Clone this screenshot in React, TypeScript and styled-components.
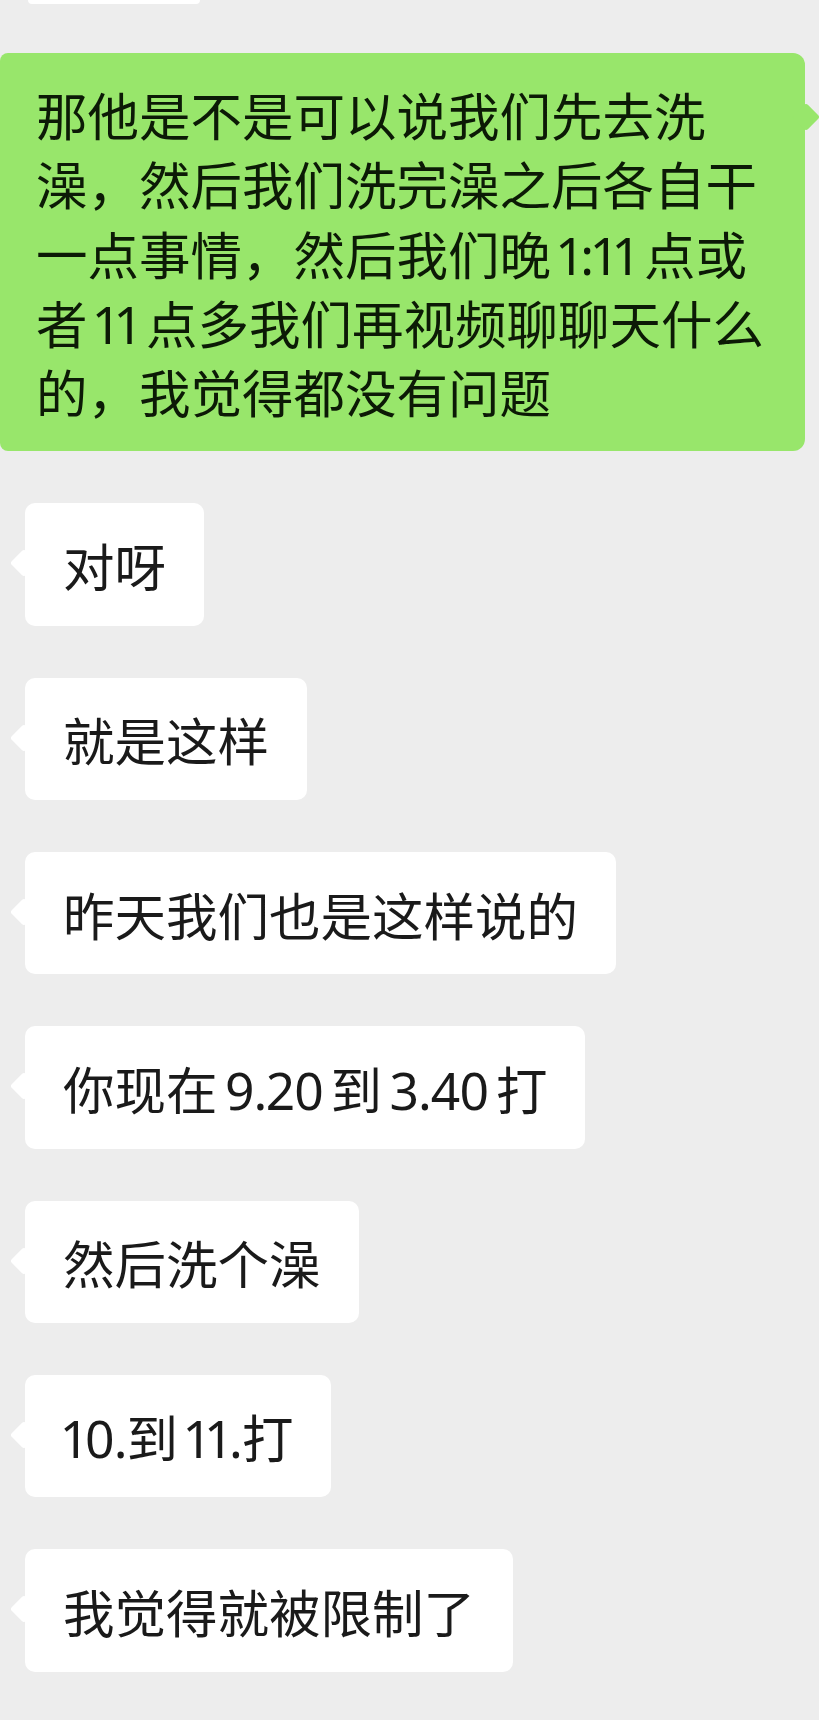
import React from 'react';
import styled, { createGlobalStyle } from 'styled-components';

const GlobalStyle = createGlobalStyle`
  html, body {
    margin: 0;
    padding: 0;
    background: #ededed;
  }
  body {
    font-family: "Noto Sans CJK SC", "Noto Sans", sans-serif;
    -webkit-font-smoothing: antialiased;
  }
`;

const Page = styled.div`
  width: 819px;
  height: 1720px;
  overflow: hidden;
  display: flex;
  flex-direction: column;
  background: #ededed;
`;

const PrevBubbleEdge = styled.div`
  width: 172px;
  height: 4px;
  margin-left: 28px;
  background: #ffffff;
  border-radius: 0 0 10px 10px;
`;

const Bubble = styled.div`
  position: relative;
  box-sizing: border-box;
  font-size: 51.5px;
  line-height: 69.3px;
  word-spacing: -4px;
  border-radius: 10px;
  white-space: nowrap;

  &::before {
    content: '';
    position: absolute;
    width: 20px;
    height: 20px;
    border-radius: 3px;
    transform: rotate(45deg);
    background: inherit;
  }
`;

const SentBubble = styled(Bubble)`
  width: 805px;
  margin-top: 49px;
  padding: 26px 36px;
  background: #98e66b;
  color: #0c1a06;
  border-radius: 8px 12px 12px 8px;

  &::before {
    top: 54px;
    right: -11px;
  }
`;

const ReceivedBubble = styled(Bubble)`
  align-self: flex-start;
  margin-left: 25px;
  margin-top: 52px;
  padding: 26.5px 38px;
  background: #ffffff;
  color: #1a1a1a;

  &::before {
    top: 50px;
    left: -11px;
  }
`;

// digits in the screenshot are proportional (narrow "1")
const Num = styled.span`
  font-family: "Noto Sans", "Noto Sans CJK SC", sans-serif;
  font-feature-settings: "pnum" 1;
  font-variant-numeric: proportional-nums;
  letter-spacing: -1px;
  line-height: 1;
`;

const withNums = (text: string) =>
  text.split(/([0-9.:]+)/).map((part, i) =>
    /^[0-9.:]+$/.test(part) ? <Num key={i}>{part}</Num> : part
  );

const sentLines = [
  '那他是不是可以说我们先去洗',
  '澡，然后我们洗完澡之后各自干',
  '一点事情，然后我们晚 1:11 点或',
  '者 11 点多我们再视频聊聊天什么',
  '的，我觉得都没有问题',
];

const received = [
  '对呀',
  '就是这样',
  '昨天我们也是这样说的',
  '你现在 9.20 到 3.40 打',
  '然后洗个澡',
  '10.到 11.打',
  '我觉得就被限制了',
];

export default function App() {
  return (
    <>
      <GlobalStyle />
      <Page>
        <PrevBubbleEdge />
        <SentBubble>
          {sentLines.map((line, i) => (
            <React.Fragment key={i}>
              {withNums(line)}
              {i < sentLines.length - 1 && <br />}
            </React.Fragment>
          ))}
        </SentBubble>
        {received.map((msg, i) => (
          <ReceivedBubble key={i}>{withNums(msg)}</ReceivedBubble>
        ))}
      </Page>
    </>
  );
}
